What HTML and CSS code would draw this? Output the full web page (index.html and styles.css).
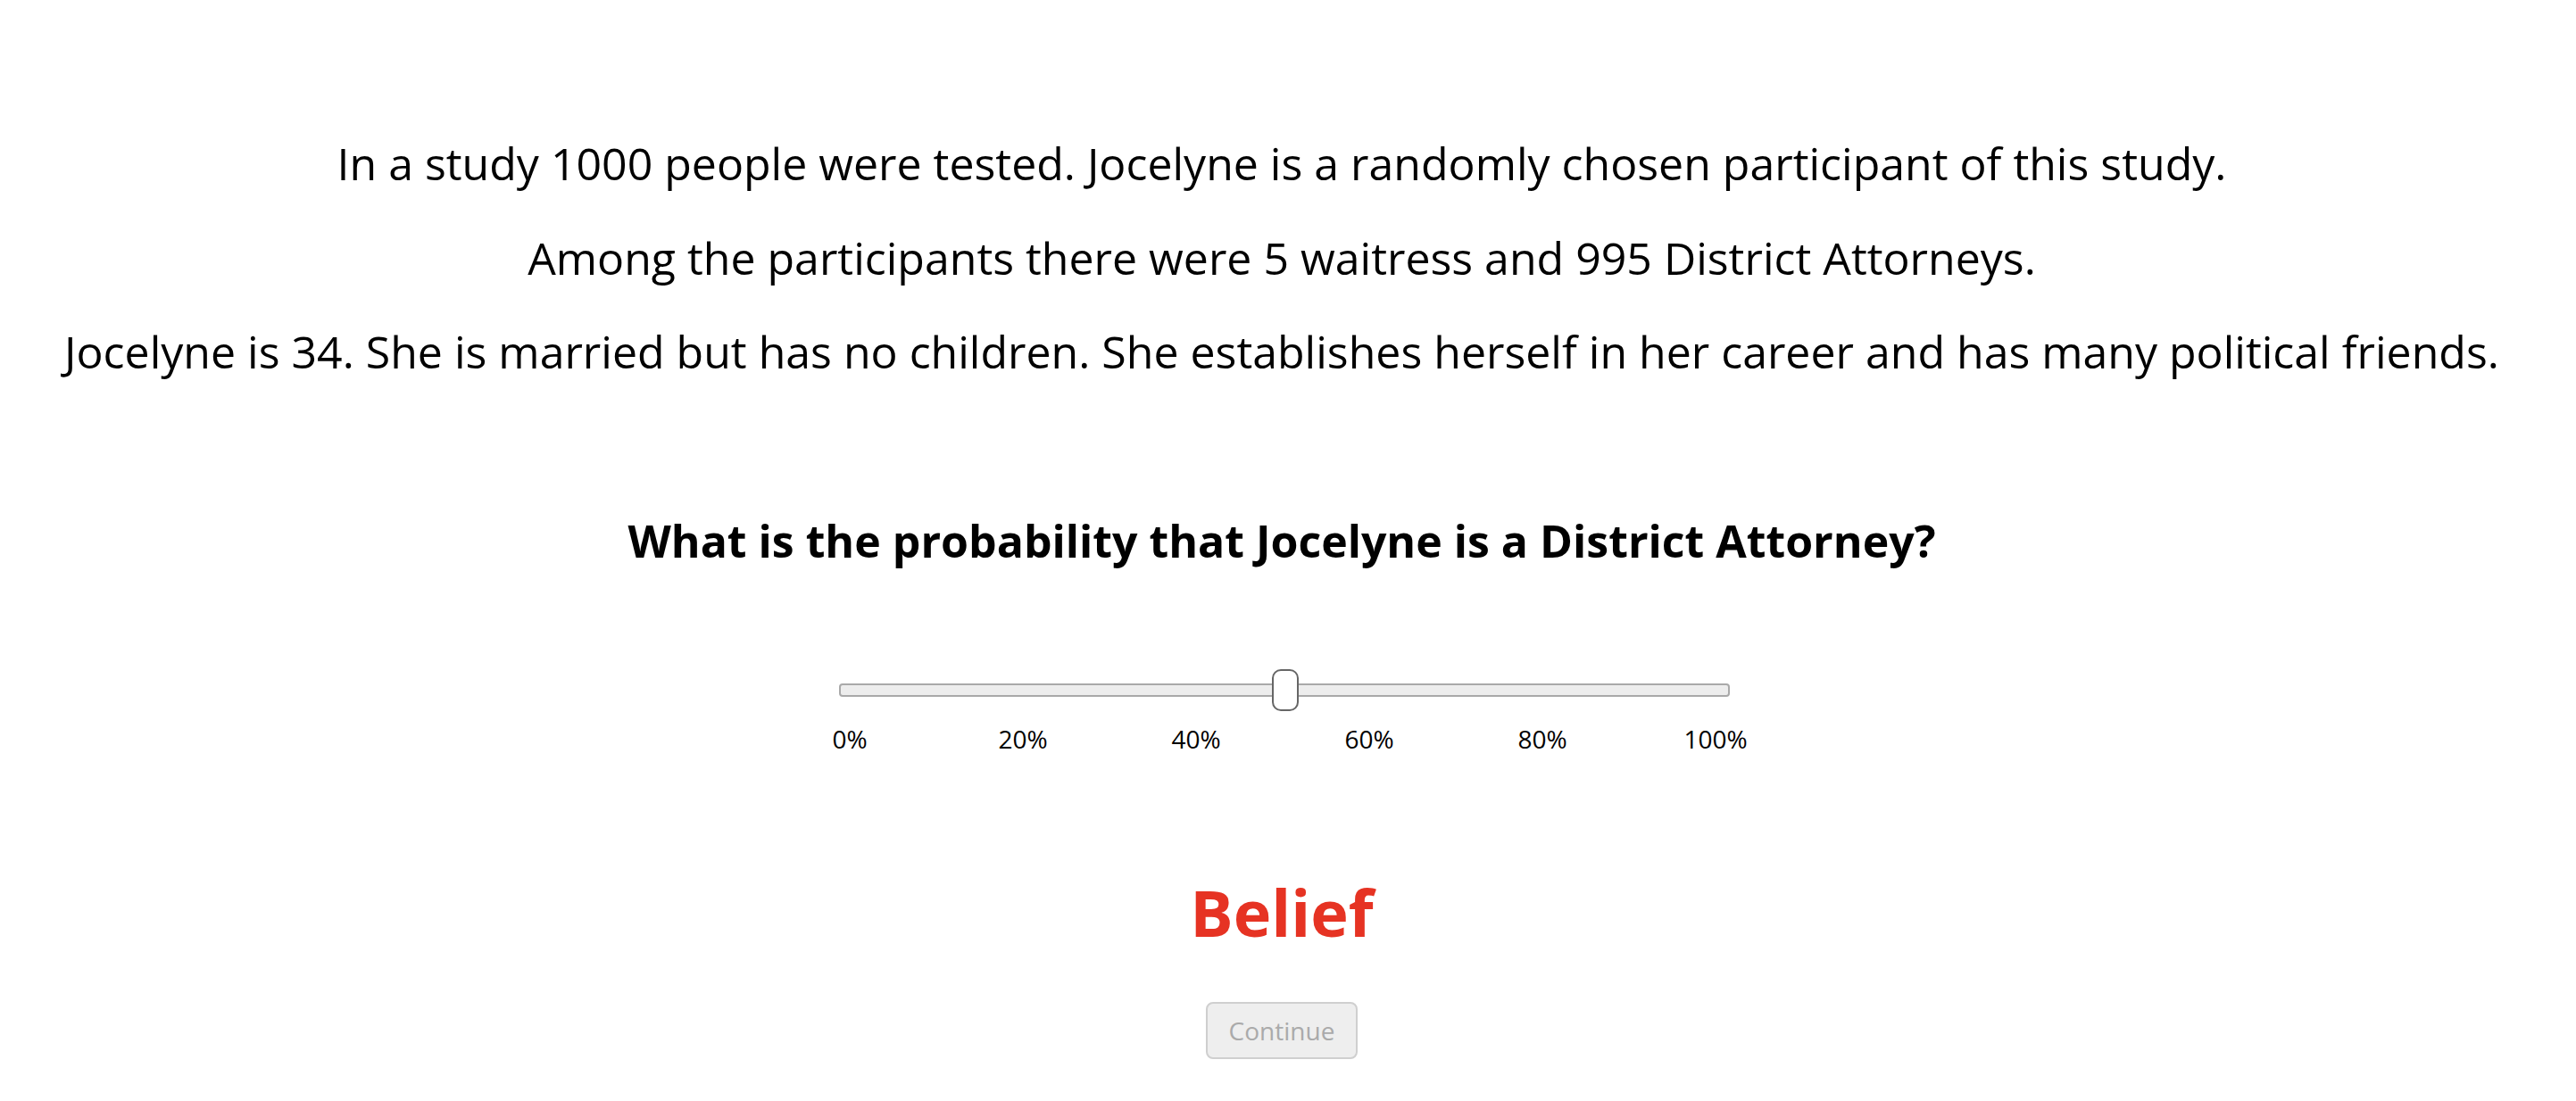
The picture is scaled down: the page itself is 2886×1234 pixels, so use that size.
FILE: index.html
```html
<!DOCTYPE html>
<html lang="en">
<head>
<meta charset="utf-8">
<title>Belief</title>
<link rel="stylesheet" href="styles.css">
</head>
<body>
<main class="page">
  <section class="story">
    <p class="story-line">In a study 1000 people were tested. Jocelyne is a randomly chosen participant of this study.</p>
    <p class="story-line">Among the participants there were 5 waitress and 995 District Attorneys.</p>
    <p class="story-line">Jocelyne is 34. She is married but has no children. She establishes herself in her career and has many political friends.</p>
  </section>
  <h2 class="question">What is the probability that Jocelyne is a District Attorney?</h2>
  <section class="slider">
    <div class="slider-rail">
      <div class="slider-track"></div>
      <div class="slider-thumb" style="left: 50%"></div>
    </div>
    <div class="slider-labels">
      <span>0%</span><span>20%</span><span>40%</span><span>60%</span><span>80%</span><span>100%</span>
    </div>
  </section>
  <h1 class="belief">Belief</h1>
  <div class="actions">
    <button class="continue" disabled>Continue</button>
  </div>
</main>
</body>
</html>
```

FILE: styles.css
```css
html, body {
  margin: 0;
  padding: 0;
  background: #fff;
}

body {
  font-family: "Open Sans", "Noto Sans", sans-serif;
  color: #000;
}

.page {
  padding: 148px 14px 0 0;
  display: flex;
  flex-direction: column;
  align-items: center;
  text-align: center;
}

.story {
  display: flex;
  flex-direction: column;
  gap: 35.5px;
}

.story-line {
  margin: 0;
  font-size: 50px;
  line-height: 70px;
  font-weight: 400;
}

.question {
  margin: 144px 0 0;
  font-size: 50px;
  line-height: 66px;
  font-weight: 700;
}

.slider {
  margin-top: 111.4px;
  display: flex;
  flex-direction: column;
  align-items: center;
  padding-left: 6px;
}

.slider-rail {
  position: relative;
  width: 998px;
  height: 47px;
  display: flex;
  align-items: center;
}

.slider-track {
  width: 100%;
  height: 15px;
  box-sizing: border-box;
  border: 2px solid #a9a9a9;
  border-radius: 4px;
  background: #ededed;
}

.slider-thumb {
  position: absolute;
  top: 0;
  width: 30px;
  height: 47px;
  margin-left: -14px;
  box-sizing: border-box;
  border: 2px solid #666;
  border-radius: 10px;
  background: #fff;
}

.slider-labels {
  margin-top: 12px;
  display: grid;
  grid-template-columns: repeat(6, 194px);
  font-size: 28px;
  line-height: 38px;
  margin-left: -4px;
}

.belief {
  margin: 126px 0 0;
  font-size: 72px;
  line-height: 98px;
  font-weight: 700;
  color: #e63323;
}

.actions {
  margin-top: 52px;
}

.continue {
  font-family: "Open Sans", "Noto Sans", sans-serif;
  font-size: 28px;
  line-height: 38px;
  padding: 11px 24px;
  border: 2px solid #cfcfcf;
  border-radius: 8px;
  background: #eeeeee;
  color: #aaaaaa;
}
```
